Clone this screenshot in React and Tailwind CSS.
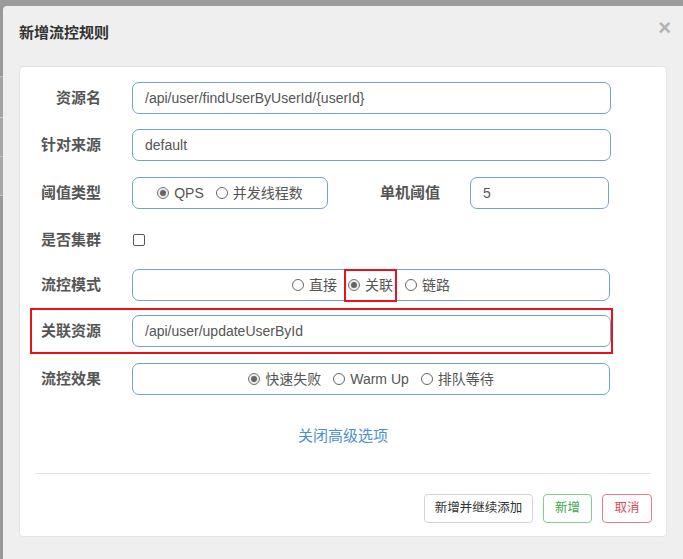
import React from "react";

const FONT = { fontFamily: '"Liberation Sans", Arial, "Noto Sans CJK SC", sans-serif' };

function Radio({ checked, label }) {
  return (
    <span className="inline-flex items-center">
      {checked ? (
        <span className="w-[12px] h-[12px] rounded-full border border-[#777] bg-[#ececec] flex items-center justify-center">
          <span className="w-[6px] h-[6px] rounded-full bg-[#666]" />
        </span>
      ) : (
        <span className="w-[12px] h-[12px] rounded-full border border-[#666] bg-white" />
      )}
      <span className="ml-[5px] text-[14px] leading-[20px] text-[#555]">{label}</span>
    </span>
  );
}

function Label({ children, w = "w-[81px]" }) {
  return (
    <div className={`${w} shrink-0 text-right text-[15px] leading-[20px] font-bold text-[#555]`}>
      {children}
    </div>
  );
}

function Input({ value, w = "w-[479px]" }) {
  return (
    <div className={`${w} h-[32px] shrink-0 rounded-[7px] border border-[#6fa3d6] bg-white px-[12px] flex items-center text-[14px] text-[#555]`}>
      {value}
    </div>
  );
}

export default function App() {
  return (
    <div className="w-[683px] h-[559px] bg-[#9a9a9a] flex flex-col overflow-hidden" style={FONT}>
      <div className="h-[6px] shrink-0 bg-[#9c9c9c]" />
      <div className="flex flex-1 min-h-0">
        <div className="w-[3px] shrink-0 flex flex-col bg-[#8e8e8e]">
          <div className="h-[70px] bg-[#999]" />
          <div className="h-[1px] bg-[#bbb]" />
          <div className="h-[40px] bg-[#a3a3a3]" />
          <div className="h-[1px] bg-[#c4c4c4]" />
          <div className="h-[38px] bg-[#a7a7a7]" />
          <div className="h-[1px] bg-[#c4c4c4]" />
          <div className="h-[38px] bg-[#a7a7a7]" />
          <div className="h-[1px] bg-[#c4c4c4]" />
          <div className="flex-1 bg-[#9a9a9a]" />
        </div>
        <div className="flex-1 bg-[#efefef] rounded-tl-[4px] flex flex-col px-[16px]">
          <div className="h-[60px] shrink-0 flex items-start justify-between pt-[17px]">
            <div className="text-[15px] leading-[20px] font-bold text-[#333]">新增流控规则</div>
            <div className="text-[22px] leading-[20px] font-bold text-[#b3b3b3] -mr-[4px] -mt-[5px]">×</div>
          </div>
          <div className="w-[648px] h-[471px] bg-white border border-[#e3e3e3] rounded-[4px] flex flex-col pt-[15px]">
            <div className="flex items-center h-[32px]">
              <Label>资源名</Label>
              <div className="ml-[31px]"><Input value="/api/user/findUserByUserId/{userId}" /></div>
            </div>
            <div className="flex items-center h-[32px] mt-[15px]">
              <Label>针对来源</Label>
              <div className="ml-[31px]"><Input value="default" /></div>
            </div>
            <div className="flex items-center h-[32px] mt-[16px]">
              <Label>阈值类型</Label>
              <div className="ml-[31px] w-[196px] h-[32px] rounded-[7px] border border-[#6fa3d6] flex items-center justify-center gap-[12px]">
                <Radio checked label="QPS" />
                <Radio label="并发线程数" />
              </div>
              <div className="ml-[52px] text-[15px] leading-[20px] font-bold text-[#555]">单机阈值</div>
              <div className="ml-[30px]"><Input value="5" w="w-[139px]" /></div>
            </div>
            <div className="flex items-center h-[32px] mt-[15px]">
              <Label>是否集群</Label>
              <div className="ml-[32px] w-[12px] h-[12px] rounded-[2px] border border-[#555] bg-white" />
            </div>
            <div className="flex items-center h-[32px] mt-[13px]">
              <Label>流控模式</Label>
              <div className="ml-[31px] w-[478px] h-[32px] rounded-[7px] border border-[#6fa3d6] flex items-center justify-center">
                <Radio label="直接" />
                <span className="ml-[7px] h-[33px] -my-[1px] inline-flex items-center border-2 border-[#e8131b] pl-[2px] pr-[2px]">
                  <Radio checked label="关联" />
                </span>
                <span className="ml-[8px] inline-flex"><Radio label="链路" /></span>
              </div>
            </div>
            <div className="ml-[10px] mt-[7px] w-[583px] border-2 border-[#e8131b] py-[5px] flex items-center">
              <Label w="w-[69px]">关联资源</Label>
              <div className="ml-[31px]"><Input value="/api/user/updateUserById" /></div>
            </div>
            <div className="flex items-center h-[32px] mt-[9px]">
              <Label>流控效果</Label>
              <div className="ml-[31px] w-[478px] h-[32px] rounded-[7px] border border-[#6fa3d6] flex items-center justify-center gap-[12px]">
                <Radio checked label="快速失败" />
                <Radio label="Warm Up" />
                <Radio label="排队等待" />
              </div>
            </div>
            <div className="mt-[31px] h-[20px] text-center text-[15px] leading-[20px] text-[#4a8fd1]">关闭高级选项</div>
            <div className="mt-[27px] mx-[15px] h-[1px] bg-[#e5e5e5]" />
            <div className="mt-[20px] mx-[14px] flex justify-end gap-[10px]">
              <div className="w-[109px] h-[29px] rounded-[4px] border border-[#d4d4d4] flex items-center justify-center text-[12.5px] text-[#333]">新增并继续添加</div>
              <div className="w-[49px] h-[29px] rounded-[4px] border border-[#7fcf8e] flex items-center justify-center text-[12.5px] text-[#3fa54f]">新增</div>
              <div className="w-[50px] h-[29px] rounded-[4px] border border-[#e97d89] flex items-center justify-center text-[12.5px] text-[#dc4a58]">取消</div>
            </div>
          </div>
        </div>
      </div>
    </div>
  );
}
